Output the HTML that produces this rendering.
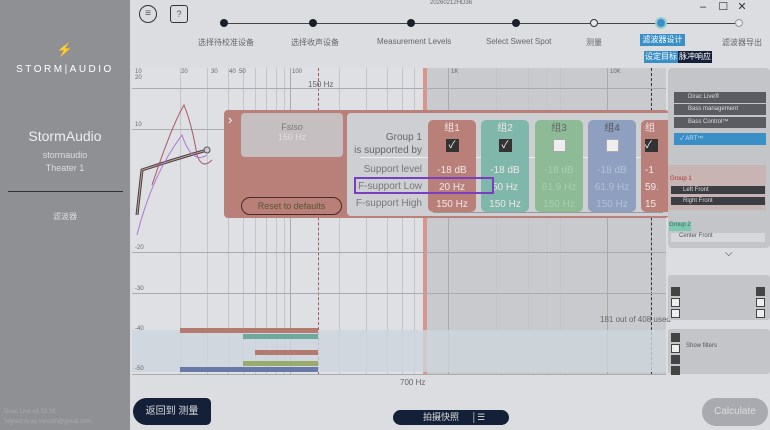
<!DOCTYPE html>
<html><head><meta charset="utf-8"><style>
*{margin:0;padding:0;box-sizing:border-box}
body{width:770px;height:430px;overflow:hidden;background:#dcdde1;font-family:"Liberation Sans","Noto Sans CJK SC",sans-serif;position:relative;color:#555}
.a{position:absolute}
.t{font-size:8px;color:#666;white-space:nowrap}
.v{position:absolute;top:68px;height:307px;width:1px;background:#c4c5ca}
.h{position:absolute;left:132px;width:534px;height:1px;background:#a9abb1}
.node{position:absolute;top:19px;width:8px;height:8px;border-radius:50%;background:#1b1f2a}
.onode{position:absolute;top:19px;width:8px;height:8px;border-radius:50%;border:1px solid #333;background:#e6e7ea}
.col{position:absolute;top:120px;height:92px;width:48px;border-radius:5px;text-align:center;font-size:10px;color:#f0e6e6}
.col div{height:17px;line-height:17px}
.cb{display:inline-block;width:13px;height:13px;margin-top:2px;background:#333;color:#fff;font-size:10px;line-height:13px}
.cbw{display:inline-block;width:13px;height:13px;margin-top:2px;background:#eee;border:1px solid #aaa}
.bar{position:absolute;height:5px}
.sq{position:absolute;width:9px;height:9px;border:1px solid #444;background:#eee;font-size:7px}
.sq.c{background:#444}
</style></head><body>
<!-- sidebar -->
<div class="a" style="left:0;top:0;width:130px;height:430px;background:#8f9094"></div>
<div class="a" style="left:0;top:42px;width:130px;text-align:center;color:#fff;font-size:13px">⚡</div>
<div class="a" style="left:0;top:64px;width:130px;text-align:center;color:#fff;font-size:10px;letter-spacing:2.5px">STORM|AUDIO</div>
<div class="a" style="left:0;top:128px;width:130px;text-align:center;color:#eee;font-size:14px">StormAudio</div>
<div class="a" style="left:0;top:150px;width:130px;text-align:center;color:#ddd;font-size:9px">stormaudio</div>
<div class="a" style="left:0;top:163px;width:130px;text-align:center;color:#ddd;font-size:9px">Theater 1</div>
<div class="a" style="left:8px;top:191px;width:115px;height:1px;background:#333"></div>
<div class="a" style="left:0;top:211px;width:130px;text-align:center;color:#ddd;font-size:8px">滤波器</div>
<div class="a" style="left:4px;top:409px;color:#aaa;font-size:6px">Dirac Live v3.13.16</div>
<div class="a" style="left:4px;top:419px;color:#aaa;font-size:6px">Signed in as vercoin@gmail.com</div>
<!-- header -->
<div class="a" style="left:139px;top:5px;width:18px;height:18px;border:1px solid #333;border-radius:50%;text-align:center;font-size:10px;line-height:16px">≡</div>
<div class="a" style="left:170px;top:5px;width:18px;height:18px;border:1px solid #333;border-radius:3px;text-align:center;font-size:9px;line-height:16px">?</div>
<div class="a t" style="left:430px;top:0;font-size:6px">20260212HD36</div>
<div class="a" style="left:700px;top:0;font-size:11px;color:#333">–&nbsp;&nbsp;&nbsp;&nbsp;☐&nbsp;&nbsp;&nbsp;✕</div>
<div class="a" style="left:225px;top:23px;width:514px;height:1px;background:#444"></div>
<div class="node" style="left:220px"></div><div class="node" style="left:309px"></div><div class="node" style="left:407px"></div><div class="node" style="left:512px"></div>
<div class="onode" style="left:590px"></div>
<div class="a" style="left:655px;top:17px;width:12px;height:12px;border-radius:50%;background:#3a8fc7;border:2px solid #9cc"></div>
<div class="onode" style="left:735px;border-color:#999"></div>
<div class="a t" style="left:198px;top:37px">选择待校准设备</div>
<div class="a t" style="left:291px;top:37px">选择收声设备</div>
<div class="a t" style="left:377px;top:37px">Measurement Levels</div>
<div class="a t" style="left:486px;top:37px">Select Sweet Spot</div>
<div class="a t" style="left:586px;top:37px">测量</div>
<div class="a" style="left:640px;top:34px;width:45px;height:12px;background:#3a8fc7;color:#fff;font-size:8px;text-align:center;line-height:12px">滤波器设计</div>
<div class="a" style="left:644px;top:51px;width:34px;height:12px;background:#3a8fc7;color:#fff;font-size:8px;text-align:center;line-height:12px">设定目标</div>
<div class="a" style="left:678px;top:51px;width:34px;height:12px;background:#132038;color:#fff;font-size:8px;text-align:center;line-height:12px">脉冲响应</div>
<div class="a t" style="left:722px;top:37px">滤波器导出</div>
<!-- chart -->
<div class="a" style="left:132px;top:68px;width:534px;height:307px;background:#dfe0e4"></div>
<div class="a" style="left:423px;top:68px;width:243px;height:307px;background:#c9cace"></div>
<div class="v" style="left:180px"></div><div class="v" style="left:207px"></div><div class="v" style="left:228px"></div><div class="v" style="left:243px"></div><div class="v" style="left:255px"></div><div class="v" style="left:266px"></div><div class="v" style="left:276px"></div><div class="v" style="left:284px"></div><div class="v" style="left:290px"></div><div class="v" style="left:339px"></div><div class="v" style="left:366px"></div><div class="v" style="left:387px"></div><div class="v" style="left:402px"></div><div class="v" style="left:414px"></div><div class="v" style="left:448px;background:#aaa"></div><div class="v" style="left:496px"></div><div class="v" style="left:528px"></div><div class="v" style="left:547px"></div><div class="v" style="left:560px"></div><div class="v" style="left:607px;background:#aaa"></div><div class="v" style="left:650px"></div><div class="v" style="left:290px;background:#aaa"></div>
<div class="a" style="left:423px;top:68px;width:4px;height:307px;background:#d9958c"></div>
<div class="a" style="left:318px;top:68px;height:307px;border-left:1px dashed #a56"></div>
<div class="a" style="left:651px;top:68px;height:307px;border-left:1px dashed #333"></div>
<div class="h" style="top:88px"></div><div class="h" style="top:129px"></div><div class="h" style="top:252px"></div><div class="h" style="top:293px"></div><div class="h" style="top:374px"></div>
<div class="a" style="left:132px;top:330px;width:534px;height:42px;background:#cdd4dc;opacity:.8"></div>
<div class="a t" style="left:135px;top:69px;font-size:6px">10<br>20</div>
<div class="a t" style="left:181px;top:69px;font-size:6px">20</div><div class="a t" style="left:211px;top:69px;font-size:6px">30</div><div class="a t" style="left:229px;top:69px;font-size:6px">40 &nbsp;50</div><div class="a t" style="left:292px;top:69px;font-size:6px">100</div><div class="a t" style="left:451px;top:69px;font-size:6px">1K</div><div class="a t" style="left:610px;top:69px;font-size:6px">10K</div>
<div class="a t" style="left:308px;top:80px">150 Hz</div>
<div class="a t" style="left:135px;top:122px;font-size:6px">10</div><div class="a t" style="left:135px;top:245px;font-size:6px">-20</div><div class="a t" style="left:135px;top:286px;font-size:6px">-30</div><div class="a t" style="left:135px;top:326px;font-size:6px">-40</div><div class="a t" style="left:135px;top:366px;font-size:6px">-50</div>
<div class="a t" style="left:400px;top:378px">700 Hz</div>
<div class="a t" style="left:600px;top:315px">181 out of 408 used</div>
<svg class="a" style="left:132px;top:95px" width="100" height="150"><path d="M5 120 L10 75 Q40 65 75 55" stroke="#444" stroke-width="3" fill="none"/><path d="M5 120 L10 75 Q40 65 75 55" stroke="#c99" stroke-width="1" fill="none"/><path d="M20 90 Q40 30 52 10 Q60 30 65 60 Q70 75 80 65" stroke="#a56" stroke-width="1" fill="none"/><path d="M5 140 Q20 80 50 40 Q60 70 75 60" stroke="#a7c" stroke-width="1" fill="none"/><circle cx="75" cy="55" r="3" fill="#ccc" stroke="#555"/></svg>
<div class="bar" style="left:180px;top:328px;width:138px;background:#b47a70"></div>
<div class="bar" style="left:243px;top:334px;width:75px;background:#6fa89d"></div>
<div class="bar" style="left:255px;top:350px;width:63px;background:#b47a70"></div>
<div class="bar" style="left:243px;top:361px;width:75px;background:#9aaa6a"></div>
<div class="bar" style="left:180px;top:367px;width:138px;background:#6a7aa8"></div>
<!-- popup -->
<div class="a" style="left:224px;top:110px;width:445px;height:108px;background:#b9807a;border-radius:4px"></div>
<div class="a" style="left:228px;top:112px;color:#fff;font-size:13px">›</div>
<div class="a" style="left:241px;top:113px;width:102px;height:44px;background:#c5bfc2;border-radius:4px;text-align:center;font-size:9px;color:#777;padding-top:9px">F<i>siso</i><br><span style="color:#ddd">150 Hz</span></div>
<div class="a" style="left:241px;top:197px;width:101px;height:18px;border:1px solid #4a2a28;border-radius:9px;text-align:center;font-size:9px;color:#553;line-height:16px">Reset to defaults</div>
<div class="a" style="left:347px;top:113px;width:321px;height:103px;background:#cecfd3;border-radius:4px 0 0 4px"></div>
<div class="a" style="left:345px;top:131px;width:77px;text-align:right;font-size:10px;color:#666;line-height:13px">Group 1<br>is supported by</div>
<div class="a" style="left:360px;top:157px;width:308px;height:1px;background:#eee"></div>
<div class="a" style="left:345px;top:161px;width:77px;text-align:right;font-size:10px;color:#777;line-height:17px">Support level<br>F-support Low<br>F-support High</div>
<div class="col" style="left:428px;background:#b9807a"><div>组1</div><div><span class="cb">✓</span></div><div style="margin-top:8px">-18 dB</div><div>20 Hz</div><div>150 Hz</div></div>
<div class="col" style="left:481px;background:#7fb7aa"><div>组2</div><div><span class="cb">✓</span></div><div style="margin-top:8px">-18 dB</div><div>50 Hz</div><div>150 Hz</div></div>
<div class="col" style="left:535px;background:#8cbb96;color:#a9cfb0"><div style="color:#666">组3</div><div><span class="cbw"></span></div><div style="margin-top:8px">-18 dB</div><div>61.9 Hz</div><div>150 Hz</div></div>
<div class="col" style="left:588px;background:#8f9fc0;color:#b4c0d8"><div style="color:#555">组4</div><div><span class="cbw"></span></div><div style="margin-top:8px">-18 dB</div><div>61.9 Hz</div><div>150 Hz</div></div>
<div class="col" style="left:641px;width:27px;background:#b9807a;border-radius:5px 0 0 5px;text-align:left;padding-left:4px"><div>组</div><div><span class="cb">✓</span></div><div style="margin-top:8px">-1</div><div>59.</div><div>15</div></div>
<div class="a" style="left:354px;top:177px;width:140px;height:17px;border:2px solid #7a3fc0"></div>
<div class="a" style="left:433px;top:212px;width:230px;height:1px;background:#999"></div>
<!-- right panel -->
<div class="a" style="left:668px;top:68px;width:102px;height:180px;background:#c4c5c9;border-radius:4px"></div>
<div class="a" style="left:668px;top:165px;width:98px;height:45px;background:#c8b4b2"></div>
<div class="a" style="left:674px;top:92px;width:92px;height:11px;background:#5a5c62;color:#ddd;font-size:6px;padding-left:14px;line-height:11px">Dirac Live®</div>
<div class="a" style="left:674px;top:104px;width:92px;height:11px;background:#5a5c62;color:#ddd;font-size:6px;padding-left:14px;line-height:11px">Bass management</div>
<div class="a" style="left:674px;top:117px;width:92px;height:11px;background:#5a5c62;color:#ddd;font-size:6px;padding-left:14px;line-height:11px">Bass Control™</div>
<div class="a" style="left:674px;top:133px;width:92px;height:12px;background:#3a8fc7;color:#cde;font-size:6px;padding-left:6px;line-height:12px">✓ ART™</div>
<div class="a" style="left:670px;top:176px;color:#a33;font-size:6px">Group 1</div>
<div class="a" style="left:671px;top:186px;width:94px;height:8px;background:#3c3e44;color:#ddd;font-size:6px;padding-left:12px;line-height:8px">Left Front</div>
<div class="a" style="left:671px;top:197px;width:94px;height:8px;background:#3c3e44;color:#ddd;font-size:6px;padding-left:12px;line-height:8px">Right Front</div>
<div class="a" style="left:669px;top:222px;width:22px;height:9px;background:#7fc9b0;font-size:6px;color:#466">Group 2</div>
<div class="a" style="left:671px;top:233px;width:94px;height:9px;background:#d6d8db;font-size:6px;color:#555;padding-left:8px">Center Front</div>
<div class="a" style="left:725px;top:248px;font-size:10px;color:#333">⌵</div>
<div class="a" style="left:668px;top:275px;width:102px;height:45px;background:#c4c5c9;border-radius:3px"></div>
<div class="a" style="left:668px;top:329px;width:102px;height:45px;background:#c4c5c9;border-radius:3px"></div>
<div class="sq c" style="left:671px;top:287px"></div><div class="sq" style="left:671px;top:298px"></div><div class="sq" style="left:671px;top:309px"></div>
<div class="sq c" style="left:756px;top:287px"></div><div class="sq" style="left:756px;top:298px"></div><div class="sq" style="left:756px;top:309px"></div>
<div class="sq c" style="left:671px;top:333px"></div><div class="sq" style="left:671px;top:344px"></div><div class="sq c" style="left:671px;top:355px"></div><div class="sq c" style="left:671px;top:366px"></div>
<div class="a" style="left:686px;top:343px;font-size:6px;color:#555">Show filters</div>
<!-- bottom -->
<div class="a" style="left:133px;top:398px;width:78px;height:27px;background:#132038;border-radius:14px 5px 5px 14px;color:#ddd;font-size:10px;text-align:center;line-height:27px">返回到 测量</div>
<div class="a" style="left:393px;top:410px;width:116px;height:15px;background:#132038;border-radius:8px;color:#ddd;font-size:9px;line-height:15px;padding-left:30px">拍摄快照 &nbsp;&nbsp;&nbsp;&nbsp;│☰</div>
<div class="a" style="left:702px;top:398px;width:66px;height:28px;background:#a8aab0;border-radius:14px;color:#ddd;font-size:10px;text-align:center;line-height:28px">Calculate</div>
</body></html>
